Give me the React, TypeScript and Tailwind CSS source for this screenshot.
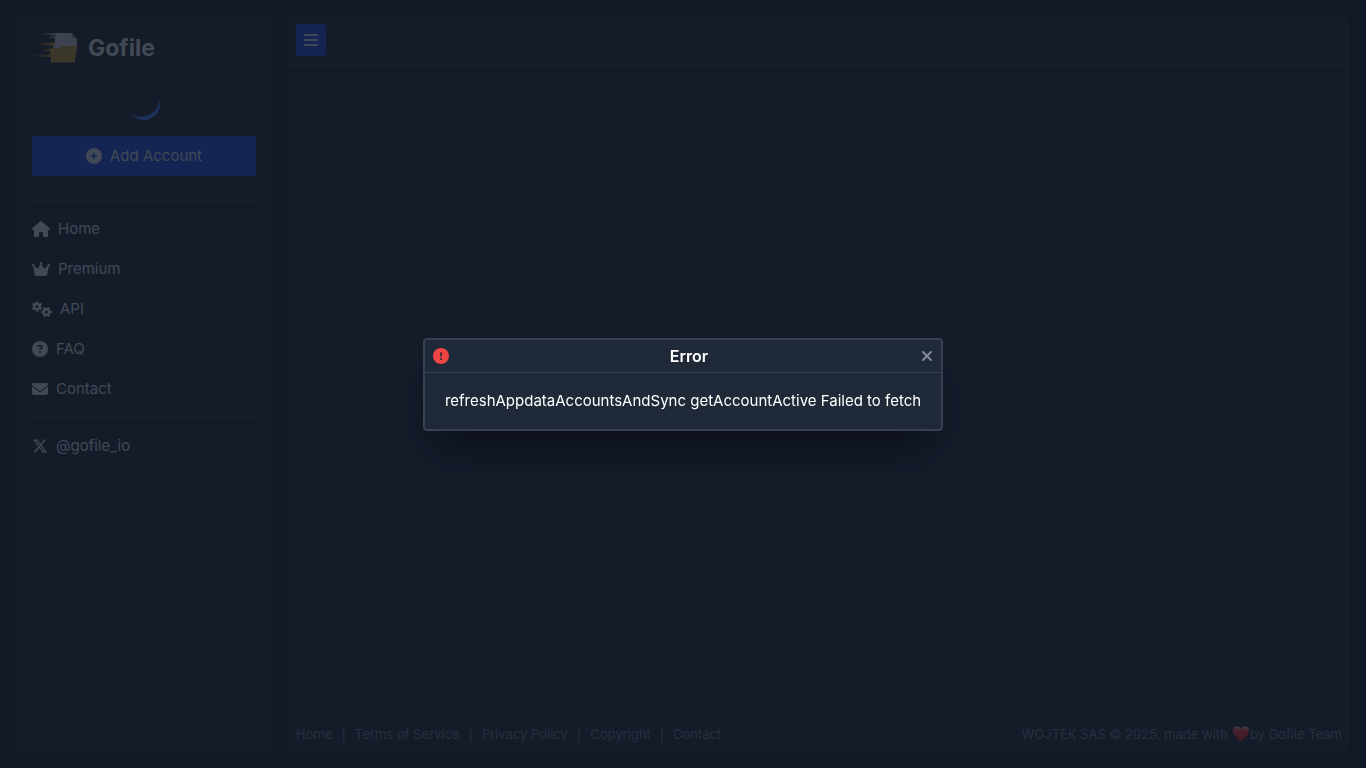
import * as React from "react";
import {
  FaBars,
  FaCircleExclamation,
  FaCirclePlus,
  FaCircleQuestion,
  FaCrown,
  FaEnvelope,
  FaGears,
  FaHouse,
  FaXmark,
  FaXTwitter,
} from "react-icons/fa6";
import type { IconType } from "react-icons";

interface NavItem {
  label: string;
  icon: IconType;
  iconClass: string;
}

const navItems: NavItem[] = [
  { label: "Home", icon: FaHouse, iconClass: "h-4 w-[18px]" },
  { label: "Premium", icon: FaCrown, iconClass: "h-4 w-[18px]" },
  { label: "API", icon: FaGears, iconClass: "h-4 w-5" },
  { label: "FAQ", icon: FaCircleQuestion, iconClass: "h-4 w-4" },
  { label: "Contact", icon: FaEnvelope, iconClass: "h-4 w-4" },
];

const footerLinks = [
  "Home",
  "Terms of Service",
  "Privacy Policy",
  "Copyright",
  "Contact",
];

function Logo() {
  return (
    <svg viewBox="0 0 48 32" className="h-8 w-12" aria-hidden="true">
      <defs>
        <linearGradient id="grayTrail" x1="0" x2="1">
          <stop offset="0" stopColor="#d1d5db" stopOpacity="0.1" />
          <stop offset="1" stopColor="#d1d5db" />
        </linearGradient>
        <linearGradient id="goldTrail" x1="0" x2="1">
          <stop offset="0" stopColor="#c8921e" stopOpacity="0.1" />
          <stop offset="1" stopColor="#c8921e" />
        </linearGradient>
      </defs>
      <path
        d="M11 1.2 H25 V3.4 L11 2.4 Z M18 4.4 H25 V6.6 L18 5.6 Z"
        fill="url(#grayTrail)"
      />
      <path
        d="M7 11.2 L23 10.6 V13.8 L7 12.4 Z M12 17.2 H20 V19.2 L12 18.4 Z M1 23 L19 22.6 V25 L1 24.2 Z"
        fill="url(#goldTrail)"
      />
      <path d="M24 1 H39.5 L45 7 V16 H22 Z" fill="#c0c3cc" />
      <path d="M39.5 1 L40 6.5 L45 7 Z" fill="#8d919c" />
      <path
        d="M18 16.5 H20.5 L21.5 10.5 L22.5 16 H28 L31 14 H45.5 L42.5 30.5 H19 Z"
        fill="#b8922c"
      />
    </svg>
  );
}

function Heart() {
  return (
    <svg viewBox="0 0 18 18" className="h-[18px] w-[18px]" aria-hidden="true">
      <defs>
        <linearGradient id="heartFill" x1="0" x2="0" y1="0" y2="1">
          <stop offset="0" stopColor="#f0a8a8" />
          <stop offset="0.3" stopColor="#d93636" />
          <stop offset="1" stopColor="#c81e1e" />
        </linearGradient>
      </defs>
      <path
        d="M9 16.5 C6 13.5 1 10.5 1 5.8 C1 3 3 1.5 5 1.5 C7 1.5 8.4 2.7 9 4.2 C9.6 2.7 11 1.5 13 1.5 C15 1.5 17 3 17 5.8 C17 10.5 12 13.5 9 16.5 Z"
        fill="url(#heartFill)"
      />
    </svg>
  );
}

function Sidebar() {
  return (
    <aside className="w-64 shrink-0 rounded-lg bg-[#1f2937] p-4">
      <a href="#" className="flex items-center gap-2">
        <Logo />
        <span className="text-[23px] leading-8 font-bold">Gofile</span>
      </a>
      <div className="mt-6 flex justify-center">
        <div
          role="status"
          aria-label="Loading"
          className="h-8 w-8 -rotate-28 rounded-full border-b-4 border-[#3b82f6]"
        />
      </div>
      <button
        type="button"
        className="mt-4 flex h-10 w-full items-center justify-center gap-2 rounded bg-[#1d4ed8]"
      >
        <FaCirclePlus className="h-4 w-4" />
        Add Account
      </button>
      <nav className="mt-6 border-t border-[#374151] pt-2">
        <ul>
          {navItems.map(({ label, icon: Icon, iconClass }) => (
            <li key={label}>
              <a href="#" className="flex h-10 items-center gap-2">
                <Icon className={iconClass} />
                {label}
              </a>
            </li>
          ))}
        </ul>
      </nav>
      <div className="mt-2 border-t border-[#374151] pt-2">
        <a href="#" className="flex h-10 items-center gap-2">
          <FaXTwitter className="h-4 w-4" />
          @gofile_io
        </a>
      </div>
    </aside>
  );
}

function Footer() {
  return (
    <footer className="flex items-center justify-between border-t border-[#374151] p-2 text-[13px] leading-5 text-[#6b7280]">
      <div className="flex gap-[9px]">
        {footerLinks.map((link, index) => (
          <React.Fragment key={link}>
            {index > 0 && <span>|</span>}
            <a href="#">{link}</a>
          </React.Fragment>
        ))}
      </div>
      <div className="flex items-center">
        <span className="mr-1">WOJTEK SAS © 2025, made with</span>
        <Heart />
        <span>by Gofile Team</span>
      </div>
    </footer>
  );
}

function ErrorDialog() {
  return (
    <div className="fixed inset-0 flex items-center justify-center bg-[#111827]/75">
      <div
        role="alertdialog"
        aria-labelledby="error-title"
        aria-describedby="error-message"
        className="rounded border-2 border-[#374151] bg-[#1f2937] text-white shadow-2xl shadow-black/50"
      >
        <div className="flex items-center border-b border-[#374151] px-2 py-1">
          <FaCircleExclamation className="mr-2 h-4 w-4 text-[#ef4444]" />
          <h2
            id="error-title"
            className="flex-1 text-center text-base font-semibold"
          >
            Error
          </h2>
          <button type="button" aria-label="Close" className="text-[#858c99]">
            <FaXmark className="h-4 w-3" />
          </button>
        </div>
        <p id="error-message" className="px-5 py-4">
          refreshAppdataAccountsAndSync getAccountActive Failed to fetch
        </p>
      </div>
    </div>
  );
}

export default function App() {
  return (
    <div className="flex min-h-screen gap-4 bg-[#111827] p-4 font-['Inter',sans-serif] text-[15px] leading-6 text-[#d1d5db]">
      <Sidebar />
      <div className="flex flex-1 flex-col rounded-lg bg-[#1f2937]">
        <header className="border-b border-[#374151] p-2">
          <button
            type="button"
            aria-label="Toggle menu"
            className="flex h-8 items-center rounded bg-[#1d4ed8] px-2"
          >
            <FaBars className="h-4 w-[14px]" />
          </button>
        </header>
        <main className="flex-1" />
        <Footer />
      </div>
      <ErrorDialog />
    </div>
  );
}
